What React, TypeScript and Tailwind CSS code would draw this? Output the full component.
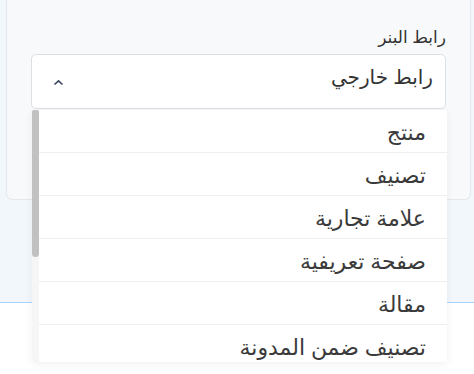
import { useState } from "react";

const options = [
  "منتج",
  "تصنيف",
  "علامة تجارية",
  "صفحة تعريفية",
  "مقالة",
  "تصنيف ضمن المدونة",
];

export default function App() {
  const [value, setValue] = useState("رابط خارجي");

  return (
    <div
      className="relative h-[374px] w-[474px] overflow-hidden bg-white"
      style={{ fontFamily: '"Noto Sans", "DejaVu Sans", sans-serif' }}
      dir="rtl"
    >
      <div className="h-[303px] border-b border-[#a9d3fb] bg-[#f2f7fc]">
        <div dir="ltr" className="flex">
          <div
            dir="rtl"
            className="ml-[6px] h-[200px] w-[465px] rounded-b-md border border-t-0 border-[#e4e8ec] bg-[#f8f9fa] px-[24px] pt-[25px]"
          >
            <label className="block text-[17px] leading-[24px] text-[#333]">رابط البنر</label>
            <div className="mt-[5px] flex h-[55px] items-center justify-between rounded-[5px] border border-[#dcdfe3] bg-white pl-[21px] pr-[12px]">
              <span className="pb-[9px] text-[20px] leading-[26px] text-[#333]">{value}</span>
              <svg width="11" height="7" viewBox="0 0 11 7" className="mt-[2px]">
                <path d="M1.5 5.5 L5.5 1.8 L9.5 5.5" fill="none" stroke="#3d4a63" strokeWidth="1.7" />
              </svg>
            </div>
          </div>
        </div>
      </div>

      {/* open dropdown list */}
      <div className="absolute left-[32px] top-[110px] flex h-[252px] w-[415px] overflow-hidden rounded-bl-[4px] bg-white shadow-[0_2px_8px_rgba(0,0,0,0.06)]">
        <ul className="flex-1">
          {options.map((o) => (
            <li
              key={o}
              onClick={() => setValue(o)}
              className="flex h-[43px] cursor-pointer items-center border-b border-[#efefef] pr-[21px] text-[22px] leading-[30px] text-[#3a3a3a]"
            >
              {o}
            </li>
          ))}
        </ul>
        <div className="h-full w-[7px] bg-[#f6f6f6]">
          <div className="h-[147px] w-full rounded-b-[4px] rounded-t-[2px] bg-[#c1c1c1]" />
        </div>
      </div>
    </div>
  );
}
